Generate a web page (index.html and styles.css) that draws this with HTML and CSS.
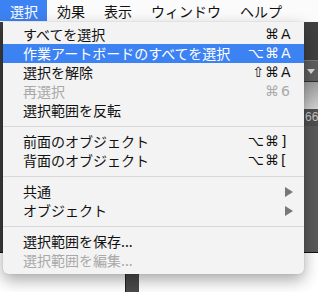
FILE: index.html
```html
<!DOCTYPE html>
<html lang="ja">
<head>
<meta charset="utf-8">
<link rel="stylesheet" href="styles.css">
</head>
<body>
<div class="menubar">
  <span class="mb-item active">選択</span>
  <span class="mb-item">効果</span>
  <span class="mb-item">表示</span>
  <span class="mb-item">ウィンドウ</span>
  <span class="mb-item">ヘルプ</span>
</div>
<div class="app">
  <div class="panel">
    <div class="left-strip"></div>
    <div class="right-strip">
      <div class="rs-dark"></div>
      <div class="rs-drop"><span class="rs-tri"></span></div>
      <div class="rs-light"></div>
      <div class="rs-num">66</div>
      <div class="rs-rest"></div>
    </div>
  </div>
  <div class="lower">
    <div class="vbar"></div>
  </div>
</div>

<div class="menu">
  <div class="row"><span class="label">すべてを選択</span><span class="sc"><span class="mods">⌘</span><span class="key">A</span></span></div>
  <div class="row hl"><span class="label">作業アートボードのすべてを選択</span><span class="sc"><span class="mods">⌥⌘</span><span class="key">A</span></span></div>
  <div class="row"><span class="label">選択を解除</span><span class="sc"><span class="mods">⇧⌘</span><span class="key">A</span></span></div>
  <div class="row dis"><span class="label">再選択</span><span class="sc"><span class="mods">⌘</span><span class="key">6</span></span></div>
  <div class="row"><span class="label">選択範囲を反転</span></div>
  <div class="sep"></div>
  <div class="row"><span class="label">前面のオブジェクト</span><span class="sc"><span class="mods">⌥⌘</span><span class="key">]</span></span></div>
  <div class="row"><span class="label">背面のオブジェクト</span><span class="sc"><span class="mods">⌥⌘</span><span class="key">[</span></span></div>
  <div class="sep"></div>
  <div class="row sub"><span class="label">共通</span><span class="arrow"></span></div>
  <div class="row sub"><span class="label">オブジェクト</span><span class="arrow"></span></div>
  <div class="sep"></div>
  <div class="row"><span class="label">選択範囲を保存...</span></div>
  <div class="row dis"><span class="label">選択範囲を編集...</span></div>
</div>
</body>
</html>
```
FILE: styles.css
```css
html, body {
  margin: 0;
  padding: 0;
}
body {
  width: 318px;
  height: 292px;
  overflow: hidden;
  position: relative;
  background: #ffffff;
  font-family: "Noto Sans CJK JP", "Noto Sans", sans-serif;
  font-size: 14px;
  color: #111;
}
.menubar {
  height: 22px;
  display: flex;
  align-items: stretch;
  background: #fbfbfb;
}
.mb-item {
  display: flex;
  align-items: center;
  padding: 0 9px 0 10px;
  line-height: 22px;
  height: 21px;
}
.mb-item.active {
  background: #3d82f2;
  color: #fff;
}
.app {
  height: 270px;
  display: flex;
  flex-direction: column;
}
.panel {
  height: 230px;
  display: flex;
  justify-content: space-between;
  background: #ffffff;
  border-bottom: 1px solid #111;
}
.left-strip {
  width: 3px;
  background: #3b3b3b;
}
.right-strip {
  width: 14px;
  display: flex;
  flex-direction: column;
}
.rs-dark {
  height: 38px;
  background: #404040;
}
.rs-drop {
  height: 20px;
  background: #5e5e5e;
  border-top: 1px solid #7a7a7a;
  border-bottom: 1px solid #2e2e2e;
  display: flex;
  align-items: center;
  justify-content: center;
}
.rs-tri {
  width: 0;
  height: 0;
  border-left: 4px solid transparent;
  border-right: 4px solid transparent;
  border-top: 5px solid #d8d8d8;
}
.rs-light {
  height: 27px;
  background: linear-gradient(#9c9c9c, #d2d2d2);
}
.rs-num {
  height: 17px;
  background: #4f4f4f;
  color: #c8c8c8;
  font-family: "Liberation Sans", sans-serif;
  font-size: 12px;
  line-height: 17px;
  padding-left: 1px;
  overflow: hidden;
  white-space: nowrap;
}
.rs-rest {
  flex: 1;
  background: #5a5a5a;
}
.lower {
  flex: 1;
  background: #fff;
  display: flex;
  padding-left: 125px;
}
.vbar {
  width: 13px;
  background: #4a4a4a;
  border-left: 1px solid #222;
}
.menu {
  position: absolute;
  top: 22px;
  left: 3px;
  width: 301px;
  height: 252px;
  box-sizing: border-box;
  padding: 3px 0 4px;
  background: #f3f3f3;
  border-radius: 0 0 5px 5px;
  box-shadow: 0 6px 16px rgba(0, 0, 0, 0.35), 0 0 1px rgba(0, 0, 0, 0.3);
  display: flex;
  flex-direction: column;
}
.row {
  height: 19px;
  display: flex;
  align-items: center;
  justify-content: space-between;
  padding: 0 12px 0 20px;
  line-height: 19px;
  white-space: nowrap;
}
.row.hl {
  background: #3d82f2;
  color: #fff;
}
.row.dis {
  color: #a9a9a9;
}
.sc {
  display: flex;
  font-family: "DejaVu Sans", "Noto Sans CJK JP", sans-serif;
  font-size: 14px;
}
.mods {
  text-align: right;
  letter-spacing: 1px;
}
.key {
  width: 11px;
  padding-left: 1px;
  text-align: left;
}
.row.sub {
  padding-right: 11px;
}
.arrow {
  width: 0;
  height: 0;
  border-top: 5px solid transparent;
  border-bottom: 5px solid transparent;
  border-left: 8px solid #777;
}
.sep {
  height: 12px;
  display: flex;
  align-items: center;
}
.sep::before {
  content: "";
  flex: 1;
  height: 1px;
  background: #d8d8d8;
}
```
